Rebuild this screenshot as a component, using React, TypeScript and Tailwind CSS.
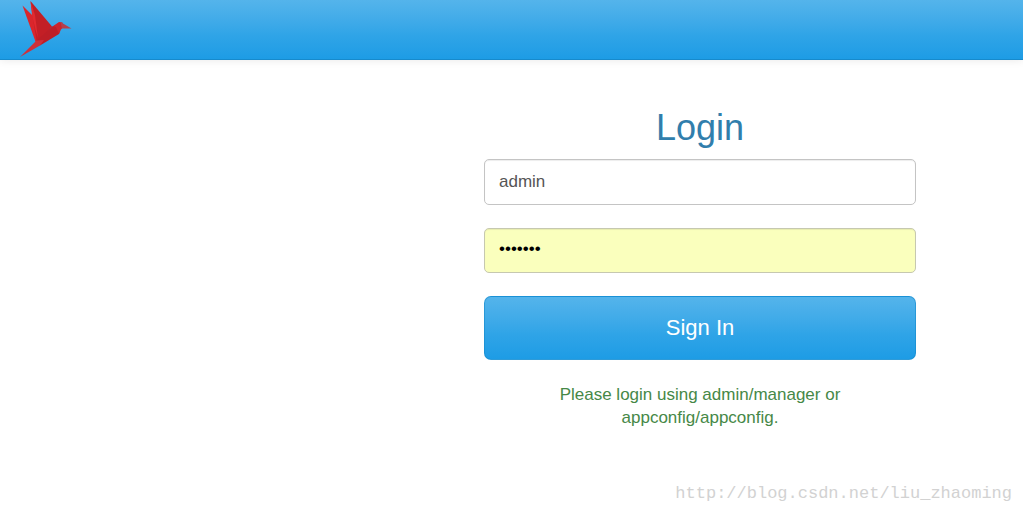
import { useState } from "react";

function BirdLogo() {
  return (
    <svg viewBox="0 0 60 60" className="block h-15 w-15" aria-hidden="true">
      <path d="M6.5 5.5 L17 16 L25 36 L20 43 Z" fill="#da262c" />
      <path d="M14.5 1 L36 26.5 L22 42 L20.5 41 L16.5 15 Z" fill="#c31f26" />
      <path d="M14.5 1 L19 15 L22 38 L19.5 30 L16 15 Z" fill="#e02a30" />
      <path d="M20.5 41 L36 26.5 L40.5 25 L44 29 L43 34 L24 45.5 Z" fill="#bd1e26" />
      <path d="M36.5 26.5 L43 22 L46.5 22.5 L47 27.5 L45 29.5 L43 34 L40 27 Z" fill="#cb242c" />
      <path d="M44.5 22 L55.5 28.5 L46 28.5 Z" fill="#b5404d" />
      <path d="M20.5 40.5 L28 40 L24 45.5 L4 57 Z" fill="#cf303a" />
    </svg>
  );
}

export default function App() {
  const [username, setUsername] = useState("admin");
  const [password, setPassword] = useState("manager");

  return (
    <div className="flex min-h-screen flex-col bg-white font-['Liberation_Sans',Arial,sans-serif] text-[17px] leading-[23px]">
      <header className="border-b border-[#178acc] bg-linear-to-b from-[#54b4eb] from-0% via-[#2fa4e7] via-60% to-[#1d9ce5] shadow-[0_1px_8px_rgba(0,0,0,0.08)]">
        <nav className="-mb-px flex px-4">
          <a href="#home" aria-label="Home">
            <BirdLogo />
          </a>
        </nav>
      </header>

      <main className="flex flex-1 justify-end pt-12 pr-[107px] pl-4">
        <form className="w-full max-w-[432px]" onSubmit={(e) => e.preventDefault()}>
          <h1 className="mb-[11px] text-center text-4xl leading-10 text-[#317eac]">Login</h1>
          <input
            type="text"
            aria-label="Username"
            value={username}
            onChange={(e) => setUsername(e.target.value)}
            className="mb-[23px] block h-[46px] w-full rounded-[5px] border border-[#c4c4c4] bg-white px-[14px] text-[#555] shadow-[inset_0_1px_1px_rgba(0,0,0,0.075)] outline-none"
          />
          <input
            type="password"
            aria-label="Password"
            value={password}
            onChange={(e) => setPassword(e.target.value)}
            className="mb-[23px] block h-[45px] w-full rounded-[5px] border border-[#c6c8b0] bg-[#faffbd] px-[14px] pb-1 text-black shadow-[inset_0_1px_1px_rgba(0,0,0,0.075)] outline-none"
          />
          <button
            type="submit"
            className="mb-[23px] block h-16 w-full rounded-[7px] border border-[#178acc]/60 bg-linear-to-b from-[#54b4eb] from-0% via-[#2fa4e7] via-60% to-[#1d9ce5] pb-0.5 text-[22px] text-white"
          >
            Sign In
          </button>
          <p className="px-14 text-center text-[#468847]">
            Please login using admin/manager or appconfig/appconfig.
          </p>
        </form>
      </main>

      <footer className="px-[11px] pb-2 text-right font-['Liberation_Mono',monospace] text-[17px] text-[#d2d2d2]">
        http://blog.csdn.net/liu_zhaoming
      </footer>
    </div>
  );
}
